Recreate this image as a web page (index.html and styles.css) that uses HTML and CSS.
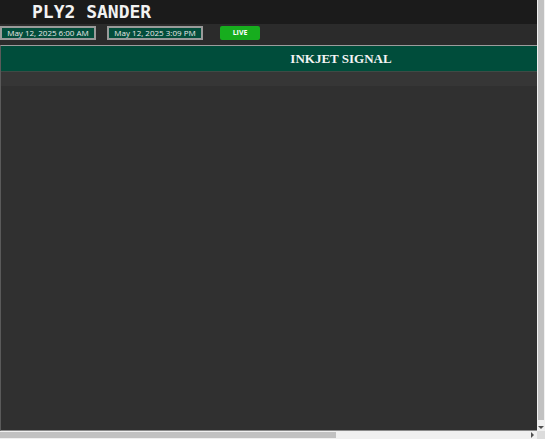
FILE: index.html
```html
<!DOCTYPE html>
<html>
<head>
<meta charset="utf-8">
<link rel="stylesheet" href="styles.css">
</head>
<body>
<div class="frame">
  <div class="viewport">
    <div class="content">
      <header class="topbar">
        <h1 class="title">PLY2 SANDER</h1>
      </header>
      <div class="toolbar">
        <div class="datebox">May 12, 2025 6:00 AM</div>
        <div class="datebox second">May 12, 2025 3:09 PM</div>
        <button class="live">LIVE</button>
      </div>
      <section class="panel">
        <div class="banner"><span>INKJET SIGNAL</span></div>
        <div class="subrow"></div>
        <div class="body"></div>
      </section>
    </div>
  </div>
  <div class="vscroll">
    <div class="vthumb"></div>
    <div class="vtrack"><span class="arrow-down"></span></div>
  </div>
  <div class="hscroll">
    <div class="hthumb"></div>
    <div class="htrack"><span class="arrow-right"></span></div>
  </div>
  <div class="corner"></div>
</div>
</body>
</html>
```
FILE: styles.css
```css
html, body {
  margin: 0;
  padding: 0;
  background: #2b2b2b;
}
.frame {
  width: 545px;
  height: 439px;
  display: grid;
  grid-template-columns: 537px 8px;
  grid-template-rows: 431px 8px;
}
.viewport {
  overflow: hidden;
  background: #2b2b2b;
}
.content {
  width: 856px;
  display: flex;
  flex-direction: column;
}
.topbar {
  height: 24px;
  background: #1b1b1b;
  display: flex;
  align-items: center;
  padding-left: 32px;
}
.title {
  margin: 0;
  font-family: "DejaVu Sans Mono", monospace;
  font-weight: bold;
  font-size: 18px;
  color: #f2f2f2;
  line-height: 24px;
}
.toolbar {
  height: 21px;
  background: #2b2b2b;
  display: flex;
  align-items: flex-start;
  padding-top: 2px;
  box-sizing: border-box;
}
.datebox {
  width: 96px;
  height: 14px;
  box-sizing: border-box;
  background: #034d3b;
  border: 2px solid #9a9a9a;
  color: #e8e8e8;
  font-family: "Open Sans", sans-serif;
  font-size: 8px;
  line-height: 10px;
  text-align: center;
}
.datebox.second {
  margin-left: 11px;
}
.live {
  margin-left: 17px;
  width: 40px;
  height: 14px;
  padding: 0;
  border: none;
  border-radius: 2px;
  background: #17ad1e;
  color: #ffffff;
  font-family: "Open Sans", sans-serif;
  font-weight: bold;
  font-size: 7px;
  line-height: 14px;
}
.panel {
  border-top: 1px solid #9c9c9c;
  border-left: 1px solid #5a5a5a;
  border-bottom: 1px solid #8a8a8a;
  display: flex;
  flex-direction: column;
}
.banner {
  height: 25px;
  background: #004d3b;
  border-bottom: 1px solid #3e4a45;
  color: #f4f4f4;
  font-family: "Liberation Serif", serif;
  font-weight: bold;
  font-size: 13px;
  line-height: 25px;
  text-align: center;
  padding-right: 175px;
}
.subrow {
  height: 14px;
  background: #363636;
}
.body {
  height: 344px;
  background: #303030;
}
.vscroll {
  display: flex;
  flex-direction: column;
  background: #f0f0f0;
}
.vthumb {
  height: 420px;
  margin: 0 1px;
  background: #c1c1c1;
}
.vtrack {
  flex: 1;
  display: flex;
  justify-content: center;
  align-items: flex-end;
  padding-bottom: 2px;
}
.arrow-down {
  width: 0;
  height: 0;
  border-left: 3px solid transparent;
  border-right: 3px solid transparent;
  border-top: 3px solid #505050;
}
.hscroll {
  display: flex;
  background: #f0f0f0;
}
.hthumb {
  width: 336px;
  margin: 1px 0;
  background: #c1c1c1;
}
.htrack {
  flex: 1;
  display: flex;
  justify-content: flex-end;
  align-items: center;
  padding-right: 3px;
}
.arrow-right {
  width: 0;
  height: 0;
  border-top: 3px solid transparent;
  border-bottom: 3px solid transparent;
  border-left: 3px solid #505050;
}
.corner {
  background: #dcdcdc;
}
```
